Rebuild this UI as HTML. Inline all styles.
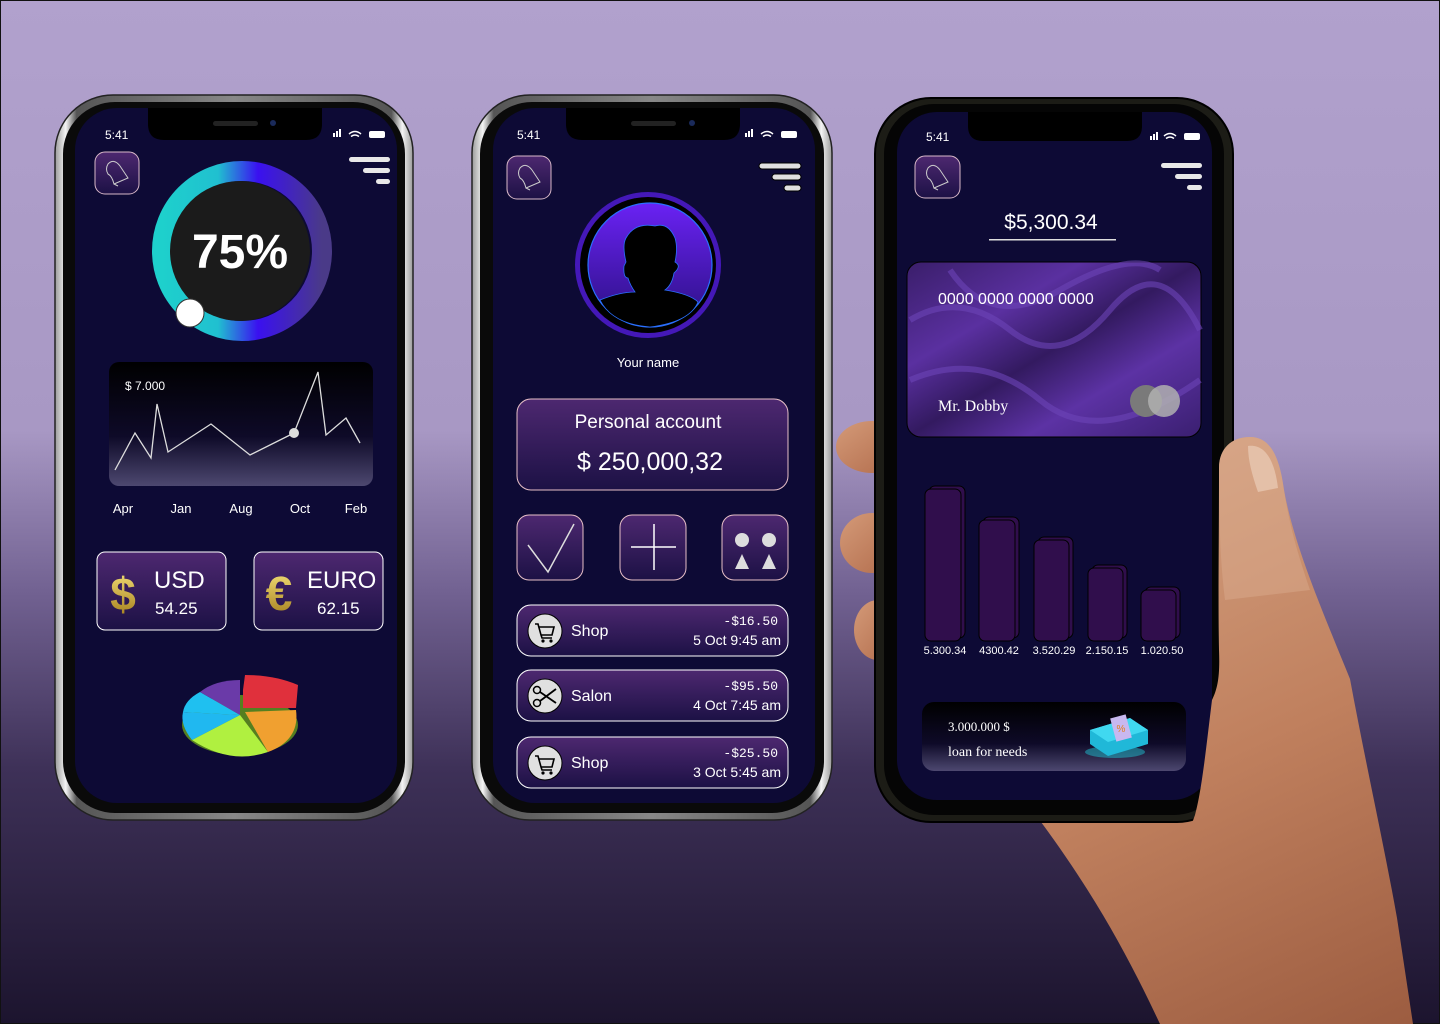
<!DOCTYPE html>
<html><head><meta charset="utf-8"><style>
html,body{margin:0;padding:0;width:1440px;height:1024px;overflow:hidden}
svg{display:block}
text{font-family:"Liberation Sans",sans-serif;fill:#fff}
</style></head><body>
<svg width="1440" height="1024" viewBox="0 0 1440 1024" xmlns="http://www.w3.org/2000/svg">
<defs>
<linearGradient id="bg" x1="0" y1="0" x2="0" y2="1">
<stop offset="0" stop-color="#b1a1cd"/><stop offset="0.42" stop-color="#a898c4"/>
<stop offset="0.58" stop-color="#716191"/><stop offset="0.75" stop-color="#3e3158"/><stop offset="1" stop-color="#1c142e"/></linearGradient>
<linearGradient id="silver" x1="0" y1="0" x2="1" y2="0">
<stop offset="0" stop-color="#9a9a9a"/><stop offset="0.03" stop-color="#f4f4f4"/><stop offset="0.06" stop-color="#555"/><stop offset="0.5" stop-color="#888"/><stop offset="0.94" stop-color="#555"/><stop offset="0.97" stop-color="#f4f4f4"/><stop offset="1" stop-color="#9a9a9a"/></linearGradient>
<linearGradient id="btn" x1="0" y1="0" x2="0" y2="1"><stop offset="0" stop-color="#4d2870"/><stop offset="1" stop-color="#1c1145"/></linearGradient>
<linearGradient id="chart" x1="0" y1="0" x2="0" y2="1"><stop offset="0" stop-color="#000"/><stop offset="0.6" stop-color="#0e0a28"/><stop offset="1" stop-color="#4d4870"/></linearGradient>
<linearGradient id="ring" x1="0" y1="0" x2="1" y2="0"><stop offset="0" stop-color="#1ed0cc"/><stop offset="0.35" stop-color="#20c0d0"/><stop offset="0.6" stop-color="#3a10f0"/><stop offset="1" stop-color="#4a3a88"/></linearGradient>
<linearGradient id="av" x1="0" y1="0" x2="0" y2="1"><stop offset="0" stop-color="#6a22f4"/><stop offset="1" stop-color="#2a1080"/></linearGradient>
<linearGradient id="card" x1="0" y1="0" x2="1" y2="1"><stop offset="0" stop-color="#3a1e6a"/><stop offset="0.3" stop-color="#5a30a0"/><stop offset="0.5" stop-color="#331a60"/><stop offset="0.7" stop-color="#5c32a4"/><stop offset="1" stop-color="#3a1f70"/></linearGradient>
<linearGradient id="skin" gradientUnits="userSpaceOnUse" x1="1150" y1="430" x2="1420" y2="1024"><stop offset="0" stop-color="#d4a282"/><stop offset="0.5" stop-color="#c0805e"/><stop offset="1" stop-color="#9c5c40"/></linearGradient>
<linearGradient id="fing" x1="0" y1="0" x2="1" y2="1"><stop offset="0" stop-color="#d49a78"/><stop offset="1" stop-color="#b06a4a"/></linearGradient>
<linearGradient id="gold" x1="0" y1="0" x2="0" y2="1"><stop offset="0" stop-color="#f6e27a"/><stop offset="1" stop-color="#a07a18"/></linearGradient>
</defs>
<rect width="1440" height="1024" fill="url(#bg)" stroke="#111" stroke-width="2"/>

<!-- hand (behind) -->
<ellipse cx="872" cy="447" rx="36" ry="26" fill="url(#fing)"/>
<ellipse cx="872" cy="543" rx="32" ry="30" fill="url(#fing)"/>
<ellipse cx="878" cy="630" rx="24" ry="30" fill="url(#fing)"/>
<path d="M1200,780 L1210,1024 L1160,1024 C1130,960 1097,898 1041,822 L1200,798 Z" fill="url(#skin)"/>

<!-- PHONE 1 -->
<rect x="55" y="95" width="358" height="725" rx="58" fill="url(#silver)" stroke="#222" stroke-width="1.5"/>
<rect x="63" y="102" width="342" height="711" rx="52" fill="#0a0a0a"/>
<rect x="75" y="108" width="322" height="695" rx="42" fill="#0d0a35"/>
<path d="M148,108 H322 V124 Q322,140 306,140 H164 Q148,140 148,124Z" fill="#000"/>
<rect x="213" y="121" width="45" height="5" rx="2.5" fill="#222"/><circle cx="273" cy="123" r="3" fill="#1a2a5a"/>
<text x="105" y="139" font-size="12">5:41</text>
<g fill="#fff"><rect x="333" y="133" width="2" height="4"/><rect x="336" y="131" width="2" height="6"/><rect x="339" y="129" width="2" height="8"/><rect x="369" y="131" width="16" height="7" rx="2"/></g>
<path d="M349,134 q6,-5 12,0 M351,136.5 q4,-3 8,0" stroke="#fff" stroke-width="1.5" fill="none"/>
<rect x="95" y="152" width="44" height="42" rx="10" fill="url(#btn)" stroke="#d8b8c8"/>
<path d="M108,164 q6,-6 12,2 l8,12 l-14,6 q-2,-8 -6,-10 q-3,-5 0,-10z M114,184 l4,2" stroke="#ccc" fill="none" stroke-width="1"/>
<g fill="#e8e8e8"><rect x="349" y="157" width="41" height="5" rx="2.5"/><rect x="363" y="168" width="27" height="5" rx="2.5"/><rect x="376" y="179" width="14" height="5" rx="2.5"/></g>
<circle cx="242" cy="251" r="80" fill="none" stroke="url(#ring)" stroke-width="20"/>
<circle cx="240" cy="251" r="70" fill="#1b1b1b"/>
<text x="240" y="268" font-size="48" font-weight="bold" text-anchor="middle">75%</text>
<circle cx="190" cy="313" r="14" fill="#fff" stroke="#333"/>
<rect x="109" y="362" width="264" height="124" rx="10" fill="url(#chart)"/>
<text x="125" y="390" font-size="12">$ 7.000</text>
<polyline points="115,470 135,433 151,458 157,404 168,452 211,424 250,455 294,433 318,372 326,435 346,418 360,443" fill="none" stroke="#ddd" stroke-width="1.3"/>
<circle cx="294" cy="433" r="5" fill="#ddd"/>
<g font-size="13" text-anchor="middle"><text x="123" y="513">Apr</text><text x="181" y="513">Jan</text><text x="241" y="513">Aug</text><text x="300" y="513">Oct</text><text x="356" y="513">Feb</text></g>
<rect x="97" y="552" width="129" height="78" rx="8" fill="url(#btn)" stroke="#fff"/>
<rect x="254" y="552" width="129" height="78" rx="8" fill="url(#btn)" stroke="#fff"/>
<text x="123" y="610" font-size="46" font-weight="bold" text-anchor="middle" style="fill:url(#gold)">$</text>
<text x="279" y="610" font-size="48" font-weight="bold" text-anchor="middle" style="fill:url(#gold)">€</text>
<text x="154" y="588" font-size="24">USD</text><text x="155" y="614" font-size="17">54.25</text>
<text x="307" y="588" font-size="24">EURO</text><text x="317" y="614" font-size="17">62.15</text>
<!-- pie -->
<ellipse cx="240" cy="725" rx="58" ry="30" fill="#557f20"/>
<path d="M240,715 L183,712 Q185,700 200,692 Z" fill="#1fc0f0"/>
<path d="M240,715 L200,692 Q215,680 240,680Z" fill="#6a3aa8"/>
<path d="M243,690 L245,675 Q275,675 298,685 L296,708 L243,708Z" fill="#e0303c"/>
<path d="M245,712 L296,710 Q300,740 268,752Z" fill="#f0a030"/>
<path d="M240,715 L268,752 Q230,765 192,740 Z" fill="#b0f040"/>
<path d="M240,715 L192,740 Q180,725 183,712Z" fill="#20b8f0"/>

<!-- PHONE 2 -->
<rect x="472" y="95" width="360" height="725" rx="58" fill="url(#silver)" stroke="#222" stroke-width="1.5"/>
<rect x="480" y="102" width="344" height="711" rx="52" fill="#0a0a0a"/>
<rect x="493" y="108" width="322" height="695" rx="42" fill="#0d0a35"/>
<path d="M566,108 H740 V124 Q740,140 724,140 H582 Q566,140 566,124Z" fill="#000"/>
<rect x="631" y="121" width="45" height="5" rx="2.5" fill="#222"/><circle cx="692" cy="123" r="3" fill="#1a2a5a"/>
<text x="517" y="139" font-size="12">5:41</text>
<g fill="#fff"><rect x="745" y="133" width="2" height="4"/><rect x="748" y="131" width="2" height="6"/><rect x="751" y="129" width="2" height="8"/><rect x="781" y="131" width="16" height="7" rx="2"/></g>
<path d="M761,134 q6,-5 12,0 M763,136.5 q4,-3 8,0" stroke="#fff" stroke-width="1.5" fill="none"/>
<rect x="507" y="156" width="44" height="43" rx="10" fill="url(#btn)" stroke="#d8b8c8"/>
<path d="M520,168 q6,-6 12,2 l8,12 l-14,6 q-2,-8 -6,-10 q-3,-5 0,-10z M526,188 l4,2" stroke="#ccc" fill="none" stroke-width="1"/>
<g fill="#e0e0e0" stroke="#000"><rect x="759" y="163" width="42" height="6" rx="3"/><rect x="772" y="174" width="29" height="6" rx="3"/><rect x="784" y="185" width="17" height="6" rx="3"/></g>
<circle cx="648" cy="265" r="73" fill="#4418b8"/>
<circle cx="648" cy="265" r="68" fill="#000"/>
<circle cx="650" cy="265" r="62" fill="url(#av)" stroke="#2a70ff" stroke-width="1.2"/>
<path d="M600,300 Q620,292 635,292 Q630,285 628,278 Q623,278 624,266 L626,262 Q622,245 626,238 Q635,222 655,226 Q668,222 675,238 Q678,248 675,262 Q682,266 674,273 Q672,285 665,290 Q690,294 698,302 Q690,322 650,327 Q612,324 600,300Z" fill="#000" stroke="#2a70ff" stroke-width="0.8"/>
<text x="648" y="367" font-size="13" text-anchor="middle">Your name</text>
<rect x="517" y="399" width="271" height="91" rx="14" fill="url(#btn)" stroke="#e8c0c8"/>
<text x="648" y="428" font-size="19" text-anchor="middle">Personal account</text>
<text x="650" y="470" font-size="25" text-anchor="middle">$ 250,000,32</text>
<g fill="url(#btn)" stroke="#e8c0c8"><rect x="517" y="515" width="66" height="65" rx="12"/><rect x="620" y="515" width="66" height="65" rx="12"/><rect x="722" y="515" width="66" height="65" rx="12"/></g>
<path d="M528,545 L548,572 L574,524" stroke="#ddd" stroke-width="1.5" fill="none"/>
<path d="M654,524 V570 M631,547 H676" stroke="#fff" stroke-width="1.5"/>
<g fill="#ddd"><circle cx="742" cy="540" r="7"/><circle cx="769" cy="540" r="7"/><path d="M735,569 L742,554 L749,569Z M762,569 L769,554 L776,569Z"/></g>
<g>
<rect x="517" y="605" width="271" height="51" rx="14" fill="url(#btn)" stroke="#fff"/>
<rect x="517" y="670" width="271" height="51" rx="14" fill="url(#btn)" stroke="#fff"/>
<rect x="517" y="737" width="271" height="51" rx="14" fill="url(#btn)" stroke="#fff"/>
<circle cx="545" cy="631" r="17" fill="#e0e0e0" stroke="#000"/>
<circle cx="545" cy="696" r="17" fill="#e0e0e0" stroke="#000"/>
<circle cx="545" cy="763" r="17" fill="#e0e0e0" stroke="#000"/>
<path d="M535,624 h3 l3,11 h11 l2,-8 h-15 M541,635 l1,3 h10" stroke="#000" stroke-width="1.6" fill="none"/><circle cx="543" cy="641" r="1.6"/><circle cx="551" cy="641" r="1.6"/>
<path d="M535,756 h3 l3,11 h11 l2,-8 h-15 M541,767 l1,3 h10" stroke="#000" stroke-width="1.6" fill="none"/><circle cx="543" cy="773" r="1.6"/><circle cx="551" cy="773" r="1.6"/>
<circle cx="537" cy="690" r="3.5" fill="none" stroke="#000" stroke-width="1.5"/><circle cx="537" cy="703" r="3.5" fill="none" stroke="#000" stroke-width="1.5"/><path d="M540,692 L556,703 M540,701 L556,689" stroke="#000" stroke-width="1.8"/>
<text x="571" y="636" font-size="16">Shop</text><text x="571" y="701" font-size="16">Salon</text><text x="571" y="768" font-size="16">Shop</text>
<g text-anchor="end"><text x="778" y="625" font-size="13" style="font-family:'Liberation Mono',monospace">-$16.50</text><text x="781" y="645" font-size="14">5 Oct 9:45 am</text>
<text x="778" y="690" font-size="13" style="font-family:'Liberation Mono',monospace">-$95.50</text><text x="781" y="710" font-size="14">4 Oct 7:45 am</text>
<text x="778" y="757" font-size="13" style="font-family:'Liberation Mono',monospace">-$25.50</text><text x="781" y="777" font-size="14">3 Oct 5:45 am</text></g>
</g>

<!-- PHONE 3 -->
<rect x="875" y="98" width="358" height="724" rx="56" fill="#1c1c16" stroke="#000" stroke-width="2"/>
<rect x="884" y="104" width="340" height="711" rx="50" fill="#050505"/>
<rect x="897" y="112" width="315" height="688" rx="40" fill="#0d0a35"/>
<path d="M968,112 H1142 V126 Q1142,141 1127,141 H983 Q968,141 968,126Z" fill="#000"/>
<text x="926" y="141" font-size="12">5:41</text>
<g fill="#fff"><rect x="1150" y="136" width="2" height="4"/><rect x="1153" y="134" width="2" height="6"/><rect x="1156" y="132" width="2" height="8"/><rect x="1184" y="133" width="16" height="7" rx="2"/></g>
<path d="M1164,136 q6,-5 12,0 M1166,138.5 q4,-3 8,0" stroke="#fff" stroke-width="1.5" fill="none"/>
<rect x="915" y="156" width="45" height="42" rx="10" fill="url(#btn)" stroke="#d8b8c8"/>
<path d="M928,168 q6,-6 12,2 l8,12 l-14,6 q-2,-8 -6,-10 q-3,-5 0,-10z M934,188 l4,2" stroke="#ccc" fill="none" stroke-width="1"/>
<g fill="#e8e8e8"><rect x="1161" y="163" width="41" height="5" rx="2.5"/><rect x="1175" y="174" width="27" height="5" rx="2.5"/><rect x="1187" y="185" width="15" height="5" rx="2.5"/></g>
<text x="1051" y="229" font-size="21" text-anchor="middle">$5,300.34</text>
<rect x="989" y="239" width="127" height="1.5" fill="#ddd"/>
<rect x="907" y="262" width="294" height="175" rx="14" fill="url(#card)" stroke="#000"/>
<path d="M910,320 Q960,290 1010,330 T1110,310 T1200,330 M910,380 Q980,350 1040,400 T1200,380 M950,270 Q990,330 1060,290 T1160,270" stroke="#6c44b8" stroke-width="6" fill="none" opacity="0.6"/>
<text x="938" y="304" font-size="16">0000 0000 0000 0000</text>
<text x="938" y="411" font-size="16" style="font-family:'Liberation Serif',serif">Mr. Dobby</text>
<circle cx="1146" cy="401" r="16" fill="#7a7a7a"/><circle cx="1164" cy="401" r="16" fill="#b0b0b0" opacity="0.85"/>
<g fill="#300e4c" stroke="#000" stroke-width="1">
<rect x="929" y="486" width="36" height="152" rx="6"/><rect x="925" y="489" width="36" height="152" rx="6"/>
<rect x="983" y="517" width="36" height="121" rx="6"/><rect x="979" y="520" width="36" height="121" rx="6"/>
<rect x="1038" y="537" width="35" height="101" rx="6"/><rect x="1034" y="540" width="35" height="101" rx="6"/>
<rect x="1092" y="565" width="35" height="73" rx="6"/><rect x="1088" y="568" width="35" height="73" rx="6"/>
<rect x="1145" y="587" width="35" height="51" rx="6"/><rect x="1141" y="590" width="35" height="51" rx="6"/>
</g>
<g font-size="11" text-anchor="middle"><text x="945" y="654">5.300.34</text><text x="999" y="654">4300.42</text><text x="1054" y="654">3.520.29</text><text x="1107" y="654">2.150.15</text><text x="1162" y="654">1.020.50</text></g>
<rect x="922" y="702" width="264" height="69" rx="12" fill="url(#chart)"/>
<text x="948" y="731" font-size="13" style="font-family:'Liberation Serif',serif">3.000.000 $</text>
<text x="948" y="756" font-size="14" style="font-family:'Liberation Serif',serif">loan for needs</text>
<ellipse cx="1115" cy="752" rx="30" ry="6" fill="#20c0d0" opacity="0.5"/>
<path d="M1090,730 L1130,718 L1148,730 L1148,744 L1108,756 L1090,744Z" fill="#20b8d8"/>
<path d="M1090,730 L1130,718 L1148,730 L1108,742Z" fill="#40d8f0"/>
<rect x="1113" y="716" width="16" height="24" fill="#c8b8f0" transform="rotate(-15 1121 728)"/>
<text x="1121" y="732" font-size="10" text-anchor="middle" style="fill:#e08020">%</text>

<!-- thumb / palm in front -->
<path d="M1219,468 C1219,448 1232,437 1250,437 C1268,437 1279,452 1284,490 C1294,545 1320,605 1350,679 C1365,760 1385,850 1397,918 L1413,1024 L1160,1024 C1165,950 1178,860 1195,815 C1202,790 1207,740 1212,700 C1218,688 1220,675 1219,650 C1218,600 1219,540 1219,468 Z" fill="url(#skin)"/>
<path d="M1219,468 C1219,448 1232,437 1250,437 C1268,437 1279,452 1284,490 C1290,530 1300,560 1310,590 L1225,600 C1220,560 1219,520 1219,468Z" fill="#dcae90" opacity="0.45"/>
<path d="M1248,446 C1262,444 1274,455 1278,488 L1258,492 C1252,475 1248,460 1248,446Z" fill="#e4c0a8"/>
</svg>
</body></html>
